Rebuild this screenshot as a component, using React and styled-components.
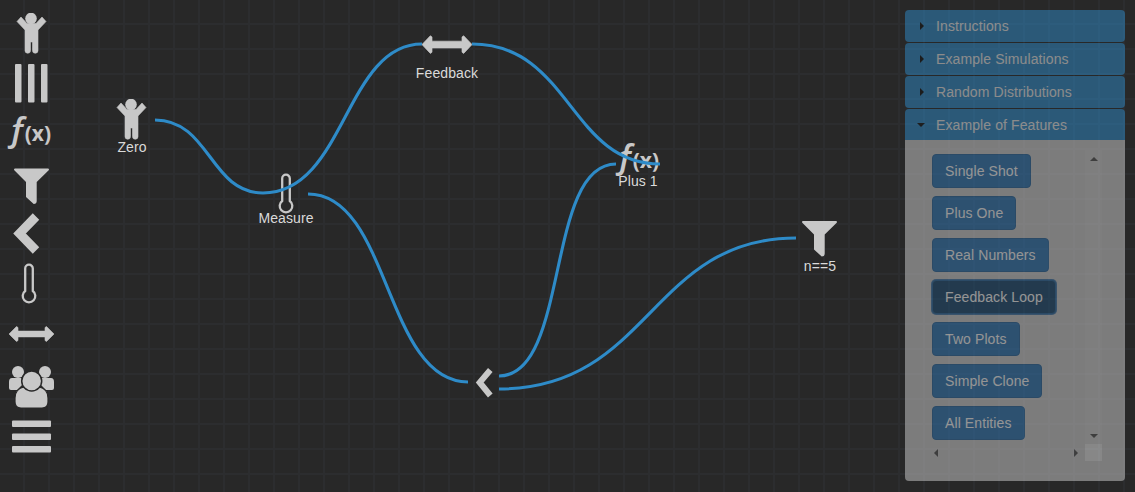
import React from "react";
import styled, { createGlobalStyle } from "styled-components";

const Global = createGlobalStyle`
  html, body { margin: 0; padding: 0; height: 100%; overflow: hidden; background: #282828; }
  #root { height: 100%; }
`;

const Page = styled.div`
  position: relative;
  width: 1135px;
  height: 492px;
  overflow: hidden;
  display: flex;
  justify-content: space-between;
  font-family: "Liberation Sans", Arial, sans-serif;
  font-size: 14px;
  letter-spacing: 0.1px;
  background-color: #282828;
  background-image:
    linear-gradient(to right, #2c2d2f 2px, transparent 2px),
    linear-gradient(to bottom, #2c2d2f 2px, transparent 2px);
  background-size: 25px 25px;
  background-position: 23px 23px;
`;

const Toolbar = styled.nav`
  width: 63px;
  display: flex;
  flex-direction: column;
`;

const Tool = styled.svg`
  display: block;
  flex: none;
  width: 63px;
  height: ${(p) => p.$h}px;
  margin-top: ${(p) => p.$mt}px;
  fill: #c8c8c8;
`;

const Canvas = styled.div`
  position: absolute;
  inset: 0;
  pointer-events: none;
`;

const Wires = styled.svg`
  position: absolute;
  inset: 0;
  width: 1135px;
  height: 492px;
  fill: none;
  stroke: #2e8bc8;
  stroke-width: 3.1;
`;

const Node = styled.div`
  position: absolute;
`;

const NodeIcon = styled.svg`
  display: block;
  position: absolute;
  fill: #c8c8c8;
`;

const NodeLabel = styled.span`
  position: absolute;
  transform: translateX(-50%);
  white-space: nowrap;
  color: #dadada;
  font-size: 14px;
  line-height: 16px;
`;

const FxGlyph = styled.div`
  display: flex;
  align-items: baseline;
  color: #c8c8c8;
  white-space: nowrap;
  line-height: 1;
  letter-spacing: 0;
  width: 46px;
`;

const FxF = styled.span`
  font-family: "Open Sans", sans-serif;
  font-style: italic;
  font-weight: 600;
  font-size: 34px;
  margin-right: -2px;
`;

const FxX = styled.span`
  font-family: "Open Sans", sans-serif;
  font-weight: 700;
  font-size: 21px;
`;

const FxTool = styled.div`
  height: 25px;
  margin-top: 18px;
  width: 63px;
  display: flex;
  align-items: center;
  padding: 0 0 12px 8px;
  box-sizing: border-box;
`;

const Panel = styled.aside`
  position: relative;
  z-index: 2;
  width: 220px;
  height: 471px;
  margin: 10px 10px 0 0;
  display: flex;
  flex-direction: column;
  border-radius: 4px;
  opacity: 0.5;
`;

const Header = styled.div`
  flex: none;
  height: ${(p) => (p.$open ? 31 : 32)}px;
  margin-bottom: ${(p) => (p.$open ? 0 : 1)}px;
  border-radius: ${(p) => (p.$open ? "4px 4px 0 0" : "4px")};
  background: #2e8bc8;
  color: #eee;
  display: flex;
  align-items: center;
  padding-left: 14px;
  gap: 11px;
`;

const Caret = styled.span`
  width: 0;
  height: 0;
  flex: none;
  ${(p) =>
    p.$open
      ? `border-left: 4px solid transparent; border-right: 4px solid transparent; border-top: 4px solid #111; margin-left: -2px;`
      : `border-top: 4px solid transparent; border-bottom: 4px solid transparent; border-left: 4px solid #111; margin-left: 1px; margin-right: 1px;`}
`;

const Body = styled.div`
  flex: 1;
  min-height: 0;
  background: #cfcfcf;
  border-radius: 0 0 4px 4px;
  padding: 10px 23px 20px 27px;
  display: flex;
  flex-direction: column;
`;

const ScrollRow = styled.div`
  flex: 1;
  display: flex;
  min-height: 0;
`;

const List = styled.div`
  flex: 1;
  padding-top: 4px;
  display: flex;
  flex-direction: column;
  align-items: flex-start;
  gap: 8px;
`;

const Btn = styled.div`
  box-sizing: border-box;
  height: 34px;
  padding: 0 12px;
  display: flex;
  align-items: center;
  border-radius: 4px;
  background: ${(p) => (p.$active ? "#204d74" : "#337ab7")};
  border: 1px solid #2e6da4;
  ${(p) => p.$active && "box-shadow: 0 0 0 1px #4a7fb0;"}
  color: #fff;
  white-space: nowrap;
`;

const VBar = styled.div`
  width: 17px;
  background: #d3d3d3;
  display: flex;
  flex-direction: column;
  align-items: center;
  justify-content: space-between;
  padding: 7px 0 6px;
  box-sizing: border-box;
`;

const HRow = styled.div`
  flex: none;
  height: 17px;
  display: flex;
`;

const HBar = styled.div`
  flex: 1;
  display: flex;
  align-items: center;
  justify-content: space-between;
  padding: 0 7px 0 2px;
`;

const Corner = styled.div`
  width: 17px;
  background: #e6e6e6;
`;

const Arrow = styled.span`
  width: 0;
  height: 0;
  ${(p) =>
    ({
      up: "border-left:4.5px solid transparent;border-right:4.5px solid transparent;border-bottom:4.5px solid #555;",
      down: "border-left:4.5px solid transparent;border-right:4.5px solid transparent;border-top:4.5px solid #555;",
      left: "border-top:4.5px solid transparent;border-bottom:4.5px solid transparent;border-right:4.5px solid #555;",
      right: "border-top:4.5px solid transparent;border-bottom:4.5px solid transparent;border-left:4.5px solid #555;",
    })[p.$d]}
`;

const Child = () => (
  <>
    <circle cx="31" cy="18.500" r="5.800" />
    <path d="M17 21.500L21 17L27 23.500H36L42 17L46 21.500L38 30V50.500a2.750 2.750 0 0 1-5.500 0V42H30.500v8.500a2.750 2.750 0 0 1-5.500 0V30z" stroke="#c8c8c8" strokeWidth=".6" strokeLinejoin="round" />
  </>
);
const Columns = () => (
  <>
    <rect x="15" y="64" width="6.500" height="38.500" rx="1" />
    <rect x="28" y="64" width="6.500" height="38.500" rx="1" />
    <rect x="41" y="64" width="6.500" height="38.500" rx="1" />
  </>
);
const Filter = () => (
  <path d="M15 168.500H48a1 1 0 0 1 .7 1.700L36.700 182V201q0 3-3 3L26 197V182L14.300 170.200a1 1 0 0 1 .7-1.700z" />
);
const Thermo = () => (
  <path
    d="M25.200 291V268.500a3.800 3.800 0 0 1 7.600 0V291a6.300 6.300 0 1 1-7.600 0z"
    fill="none"
    stroke="#c8c8c8"
    strokeWidth="2.300"
  />
);
const Arrows = () => (
  <path
    d="M9 334L16.500 326.500l1.500 1V331.100H45V327.500l1.500-1L54 334l-7.500 7.500-1.500-1V336.900H18V340.500l-1.500 1z"
    stroke="#c8c8c8"
    strokeWidth=".6"
    strokeLinejoin="round"
  />
);
const Users = () => (
  <>
    <circle cx="18" cy="372" r="6" />
    <circle cx="45" cy="372" r="6" />
    <path d="M12 378h9l4 4-8 8H11q-2 0-2-2v-6q0-4 3-4zM51 378h-9l-4 4 8 8h6q2 0 2-2v-6q0-4-3-4z" />
    <path d="M15 402v-4q0-9 9-11q7.500 4 15 0q9 2 9 11v4q0 6-6 6H21q-6 0-6-6z" stroke="#282828" strokeWidth="1.200" />
    <circle cx="31.700" cy="381" r="10" stroke="#282828" strokeWidth="1.500" />
  </>
);
const Bars = () => (
  <>
    <rect x="12" y="420.500" width="39" height="6.500" rx="1" />
    <rect x="12" y="433.500" width="39" height="6.500" rx="1" />
    <rect x="12" y="446" width="39" height="6.500" rx="1" />
  </>
);

const wires = [
  "M155 120C210 120 210 193 263 193",
  "M263 193C345 193 345 44 422 44",
  "M472 44C570 44 570 164 660 164",
  "M308 194C390 194 385 382 468 382",
  "M499 376C570 376 545 164 616 164",
  "M499 389C650 389 650 238 796 238",
];

const headers = ["Instructions", "Example Simulations", "Random Distributions"];
const examples = ["Single Shot", "Plus One", "Real Numbers", "Feedback Loop", "Two Plots", "Simple Clone", "All Entities"];

export default function App() {
  return (
    <Page>
      <Global />
      <Toolbar>
        <Tool $h={41} $mt={13} viewBox="0 13 63 41"><Child /></Tool>
        <Tool $h={39} $mt={10} viewBox="0 64 63 39"><Columns /></Tool>
        <FxTool>
          <FxGlyph><FxF>ƒ</FxF><FxX>(x)</FxX></FxGlyph>
        </FxTool>
        <Tool $h={36} $mt={22} viewBox="0 168 63 36"><Filter /></Tool>
        <Tool $h={41} $mt={9} viewBox="0 213 63 41">
          <polyline points="36,216.500 19.500,233.500 36,250.500" fill="none" stroke="#c8c8c8" strokeWidth="9" />
        </Tool>
        <Tool $h={42} $mt={9} viewBox="0 263 63 42"><Thermo /></Tool>
        <Tool $h={17} $mt={20} viewBox="0 325 63 17"><Arrows /></Tool>
        <Tool $h={44} $mt={23} viewBox="0 365 63 44"><Users /></Tool>
        <Tool $h={33} $mt={11} viewBox="0 420 63 33"><Bars /></Tool>
      </Toolbar>

      <Canvas>
        <Node style={{ left: 100, top: 99 }}>
          <NodeIcon width="63" height="41" viewBox="0 13 63 41"><Child /></NodeIcon>
          <NodeLabel style={{ left: 32, top: 40 }}>Zero</NodeLabel>
        </Node>
        <Node style={{ left: 257, top: 173 }}>
          <NodeIcon width="63" height="42" viewBox="0 263 63 42"><Thermo /></NodeIcon>
          <NodeLabel style={{ left: 29, top: 37 }}>Measure</NodeLabel>
        </Node>
        <Node style={{ left: 412, top: 34 }}>
          <NodeIcon width="70" height="20" viewBox="0 325 63 17" preserveAspectRatio="none"><Arrows /></NodeIcon>
          <NodeLabel style={{ left: 35, top: 31 }}>Feedback</NodeLabel>
        </Node>
        <Node style={{ left: 616, top: 138 }}>
          <FxGlyph><FxF>ƒ</FxF><FxX>(x)</FxX></FxGlyph>
          <NodeLabel style={{ left: 22, top: 35 }}>Plus 1</NodeLabel>
        </Node>
        <Node style={{ left: 788, top: 220 }}>
          <NodeIcon width="63" height="37" viewBox="0 168 63 36"><Filter /></NodeIcon>
          <NodeLabel style={{ left: 32, top: 38 }}>n==5</NodeLabel>
        </Node>
        <Node style={{ left: 470, top: 365 }}>
          <NodeIcon width="26" height="36" viewBox="470 365 26 36">
            <polyline points="490.300,370 479.700,382.500 490.300,395.500" stroke="#c8c8c8" strokeWidth="6" fill="none" />
          </NodeIcon>
        </Node>
        <Wires viewBox="0 0 1135 492">
          {wires.map((d) => (
            <path key={d} d={d} />
          ))}
        </Wires>
      </Canvas>

      <Panel>
        {headers.map((h) => (
          <Header key={h}><Caret />{h}</Header>
        ))}
        <Header $open><Caret $open />Example of Features</Header>
        <Body>
          <ScrollRow>
            <List>
              {examples.map((e) => (
                <Btn key={e} $active={e === "Feedback Loop"}>{e}</Btn>
              ))}
            </List>
            <VBar><Arrow $d="up" /><Arrow $d="down" /></VBar>
          </ScrollRow>
          <HRow>
            <HBar><Arrow $d="left" /><Arrow $d="right" /></HBar>
            <Corner />
          </HRow>
        </Body>
      </Panel>
    </Page>
  );
}
